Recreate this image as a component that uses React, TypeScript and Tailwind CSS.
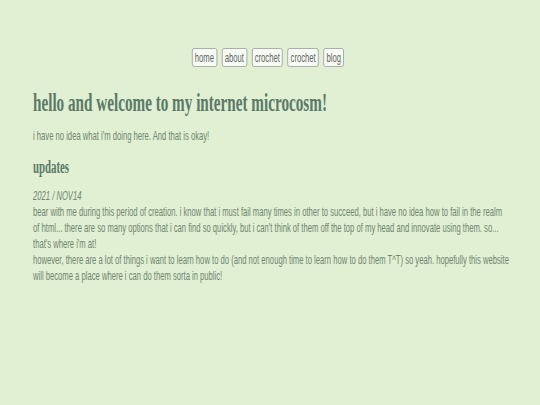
import React from "react";

const links = ["home", "about", "crochet", "crochet", "blog"];

export default function App() {
  return (
    <div className="min-h-[405px] w-[540px] overflow-hidden bg-[#e1efd3]">
      <div className="w-[900px] origin-top-left scale-x-[0.6] pl-[55px] pr-[50px] pt-[48px] font-['Liberation_Sans',Arial,sans-serif] text-[#6f8671]">
        <nav className="flex justify-center gap-[8px] pr-[12px]">
          {links.map((l, i) => (
            <a
              key={i}
              href="#"
              className="flex h-[19px] items-center rounded-[3px] border border-[#979e97] bg-[#f8faf5] px-[4px] text-[12.75px] text-[#5f665f]"
            >
              {l}
            </a>
          ))}
        </nav>

        <h1 className="mt-[20px] font-['Liberation_Serif','Times_New_Roman',serif] text-[25.3px] leading-[30px] font-bold text-[#5a7a68]">
          hello and welcome to my internet microcosm!
        </h1>

        <p className="mt-[11px] text-[12.75px] leading-4">
          i have no idea what i'm doing here. And that is okay!
        </p>

        <h2 className="mt-[12px] font-['Liberation_Serif','Times_New_Roman',serif] text-[18px] leading-[22px] font-bold text-[#5a7a68]">
          updates
        </h2>

        <div className="mt-[10px] text-[12.75px] leading-4">
          <p className="italic">2021 / NOV14</p>
          <p>
            bear with me during this period of creation. i know that i must fail many times in other to succeed, but i have no idea how to fail in the realm of html... there are so many options that i can find so quickly, but i can't think of them off the top of my head and innovate using them. so... that's where i'm at!
          </p>
          <p>
            however, there are a lot of things i want to learn how to do (and not enough time to learn how to do them T^T) so yeah. hopefully this website will become a place where i can do them sorta in public!
          </p>
        </div>
      </div>
    </div>
  );
}
